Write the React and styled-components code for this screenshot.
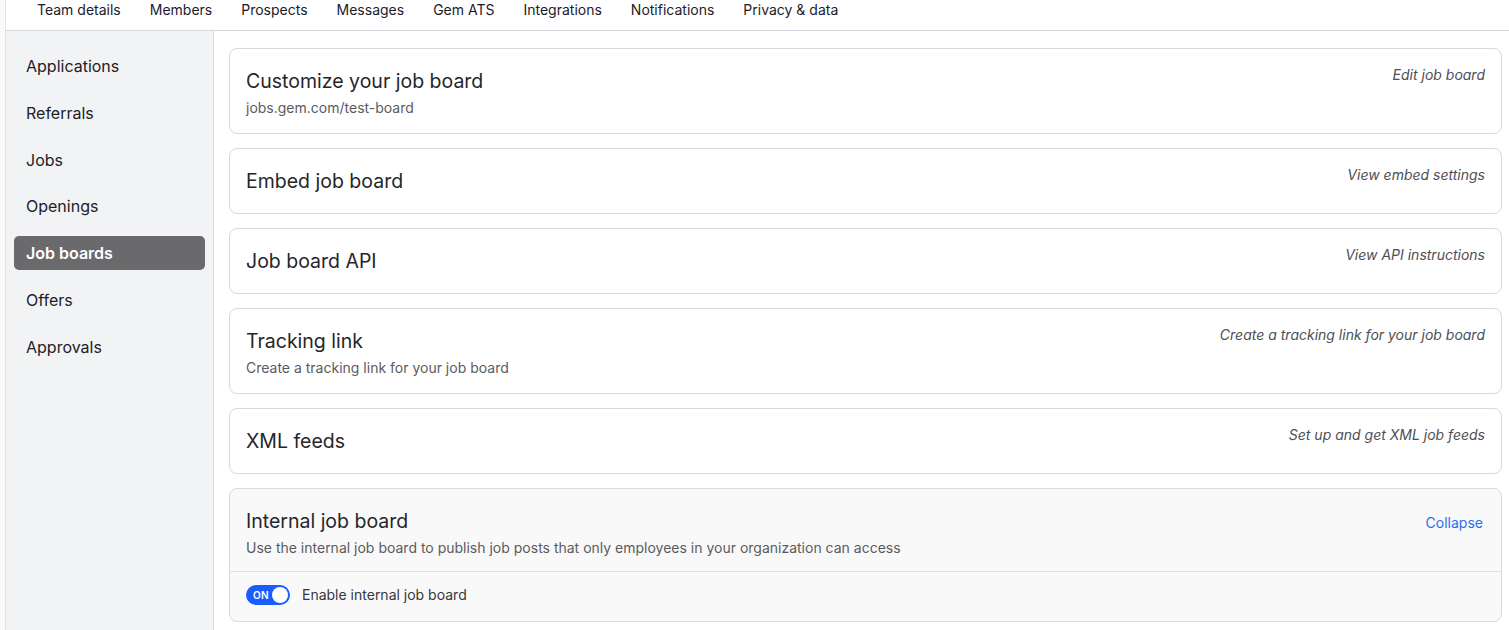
import React from "react";
import styled, { createGlobalStyle } from "styled-components";

const Global = createGlobalStyle`
  html, body { margin: 0; padding: 0; background: #f7f7f8; }
  body { font-family: Inter, "Noto Sans", "Liberation Sans", sans-serif; color: #1f2024; overflow: hidden; }
  * { box-sizing: border-box; }
`;

const Shell = styled.div`
  padding-left: 5px;
  min-height: 100vh;
  background: #f9f9fa;
`;

const Frame = styled.div`
  border-left: 1px solid #e1e2e6;
  background: #fff;
  min-height: 100vh;
  display: flex;
  flex-direction: column;
`;

const TopNav = styled.nav`
  height: 31px;
  border-bottom: 1px solid #d6d7de;
  display: flex;
  align-items: flex-start;
  gap: 29px;
  padding-left: 31px;
`;

const NavItem = styled.a`
  font-size: 14px;
  line-height: 20px;
  color: #1b1b2a;
  text-decoration: none;
  white-space: nowrap;
`;

const Body = styled.div`
  display: flex;
  flex: 1;
`;

const Sidebar = styled.aside`
  width: 208px;
  flex-shrink: 0;
  background: #f2f3f5;
  border-right: 1px solid #d9dade;
  padding: 18px 8px 0 8px;
  display: flex;
  flex-direction: column;
  gap: 12.75px;
  min-height: 600px;
`;

const SideItem = styled.a`
  display: flex;
  align-items: center;
  height: 34px;
  padding-left: 12px;
  border-radius: 5px;
  font-size: 16px;
  color: ${(p) => (p.$active ? "#ffffff" : "#1e2127")};
  background: ${(p) => (p.$active ? "#6a6a6d" : "transparent")};
  font-weight: ${(p) => (p.$active ? 600 : 400)};
  text-decoration: none;
`;

const Main = styled.main`
  flex: 1;
  padding: 17px 7px 0 15px;
  display: flex;
  flex-direction: column;
  gap: 14px;
`;

const Card = styled.section`
  border: 1px solid #d8d9de;
  border-radius: 8px;
  background: ${(p) => (p.$muted ? "#f9f9f9" : "#ffffff")};
`;

const CardHead = styled.div`
  display: flex;
  justify-content: space-between;
  align-items: flex-start;
  padding: 18px 16px ${(p) => p.$bottom || "18px"} 16px;
`;

const TitleBlock = styled.div`
  display: flex;
  flex-direction: column;
`;

const Title = styled.h2`
  margin: 0;
  font-size: 19.5px;
  line-height: 28px;
  font-weight: 400;
  color: #26262a;
`;

const Sub = styled.p`
  margin: 3px 0 0;
  font-size: 14px;
  line-height: 20px;
  color: #5a5b60;
`;

const Action = styled.a`
  font-size: 14px;
  line-height: 16px;
  font-style: italic;
  color: #4e4f54;
  text-decoration: none;
  white-space: nowrap;
`;

const Collapse = styled.a`
  font-size: 14px;
  line-height: 28px;
  margin-top: 2px;
  color: #2a6ff0;
  text-decoration: none;
  margin-right: 2px;
`;

const CardFoot = styled.div`
  border-top: 1px solid #e1e2e6;
  height: 50px;
  padding: 13px 16px 0;
  display: flex;
  align-items: flex-start;
  gap: 12px;
`;

const Toggle = styled.span`
  width: 44px;
  height: 20px;
  border-radius: 10px;
  background: #1a5dfc;
  display: flex;
  align-items: center;
  justify-content: space-between;
  padding: 0 2px 0 7px;
`;

const ToggleText = styled.span`
  color: #fff;
  font-size: 10px;
  font-weight: 600;
  letter-spacing: 0.2px;
`;

const Knob = styled.span`
  width: 16px;
  height: 16px;
  border-radius: 50%;
  background: #fff;
`;

const FootLabel = styled.span`
  font-size: 14px;
  line-height: 20px;
  color: #36373b;
`;

const navItems = [
  "Team details",
  "Members",
  "Prospects",
  "Messages",
  "Gem ATS",
  "Integrations",
  "Notifications",
  "Privacy & data",
];

const sideItems = [
  "Applications",
  "Referrals",
  "Jobs",
  "Openings",
  "Job boards",
  "Offers",
  "Approvals",
];

const cards = [
  { title: "Customize your job board", sub: "jobs.gem.com/test-board", action: "Edit job board" },
  { title: "Embed job board", action: "View embed settings" },
  { title: "Job board API", action: "View API instructions" },
  { title: "Tracking link", sub: "Create a tracking link for your job board", action: "Create a tracking link for your job board" },
  { title: "XML feeds", action: "Set up and get XML job feeds" },
];

export default function App() {
  return (
    <>
      <Global />
      <Shell>
        <Frame>
          <TopNav>
            {navItems.map((n) => (
              <NavItem key={n}>{n}</NavItem>
            ))}
          </TopNav>
          <Body>
            <Sidebar>
              {sideItems.map((s) => (
                <SideItem key={s} $active={s === "Job boards"}>
                  {s}
                </SideItem>
              ))}
            </Sidebar>
            <Main>
              {cards.map((c) => (
                <Card key={c.title}>
                  <CardHead $bottom={c.sub ? "15px" : "18px"}>
                    <TitleBlock>
                      <Title>{c.title}</Title>
                      {c.sub && <Sub>{c.sub}</Sub>}
                    </TitleBlock>
                    <Action>{c.action}</Action>
                  </CardHead>
                </Card>
              ))}
              <Card $muted>
                <CardHead $bottom="13px">
                  <TitleBlock>
                    <Title>Internal job board</Title>
                    <Sub>Use the internal job board to publish job posts that only employees in your organization can access</Sub>
                  </TitleBlock>
                  <Collapse>Collapse</Collapse>
                </CardHead>
                <CardFoot>
                  <Toggle>
                    <ToggleText>ON</ToggleText>
                    <Knob />
                  </Toggle>
                  <FootLabel>Enable internal job board</FootLabel>
                </CardFoot>
              </Card>
            </Main>
          </Body>
        </Frame>
      </Shell>
    </>
  );
}
